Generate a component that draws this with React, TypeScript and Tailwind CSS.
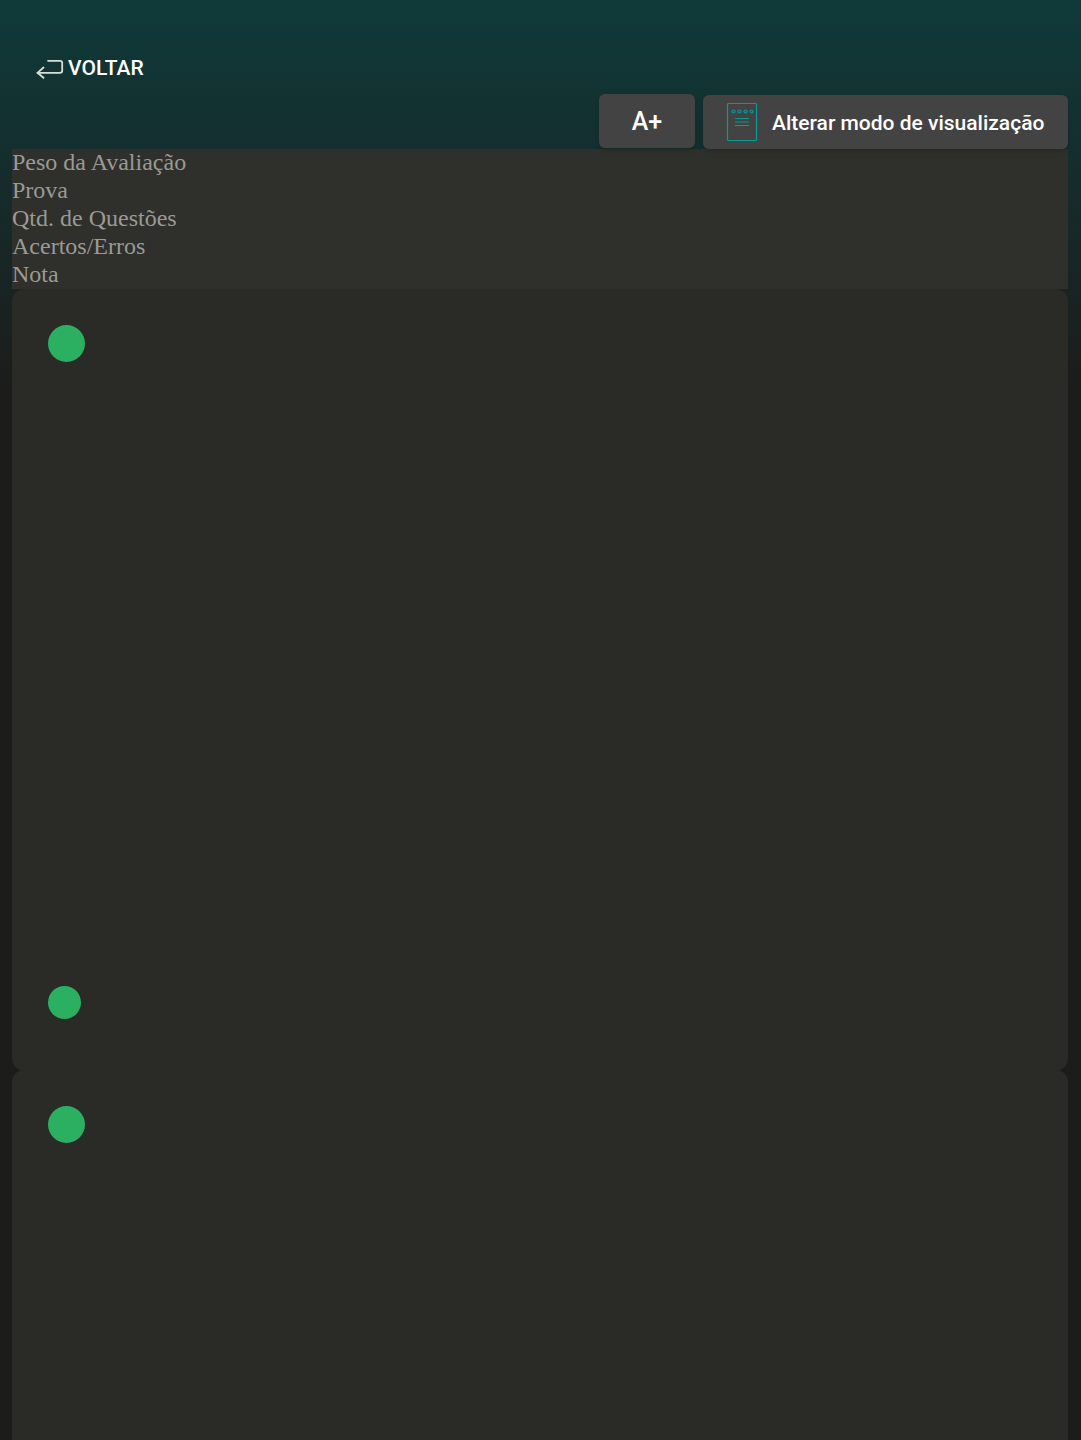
function ViewIcon() {
  return (
    <svg width="32" height="40" viewBox="0 0 32 40" fill="none" stroke="#0a9a96" strokeWidth="1.2">
      <rect x="1.5" y="1.5" width="29" height="37" rx="1" />
      <circle cx="7.5" cy="9.5" r="1.5" />
      <circle cx="13.5" cy="9.5" r="1.5" />
      <circle cx="19.5" cy="9.5" r="1.5" />
      <circle cx="25.5" cy="9.5" r="1.5" />
      <path d="M9 16.5H23M9 20H23M9 23.5H23" />
    </svg>
  );
}

function BackIcon() {
  return (
    <svg width="28" height="20" viewBox="0 0 28 20" fill="none" stroke="#d9dedd" strokeWidth="1.8" strokeLinecap="round" strokeLinejoin="round">
      <path d="M12 1.8H24C25.6 1.8 26.2 2.5 26.2 4V11.5C26.2 13 25.6 13.8 24 13.8H1.5" />
      <path d="M7.5 8.5L1.5 13.8L7.5 18.8" />
    </svg>
  );
}

const lines = ['Peso da Avaliação', 'Prova', 'Qtd. de Questões', 'Acertos/Erros', 'Nota'];

function Card() {
  return (
    <div className="rounded-xl bg-[#2a2a27] px-9 pt-9 pb-[51px] shadow-[0_1px_0_#242421]">
      <div className="w-[37px] h-[37px] rounded-full bg-[#2bb062]"></div>
      <div className="w-[33px] h-[33px] rounded-full bg-[#2bb062] mt-[624px]"></div>
    </div>
  );
}

export default function App() {
  return (
    <div className="h-[1440px] overflow-hidden bg-[linear-gradient(to_bottom,#0f3a3a_0px,#1c1c1b_390px)] font-['Roboto',sans-serif]">
      <div className="pl-3 pr-[13px] pt-[53px]">
        <div className="flex items-center h-8 pl-[24px] text-white text-[21px] font-medium">
          <BackIcon />
          <span className="ml-[4px]">VOLTAR</span>
        </div>
        <div className="flex justify-end items-start gap-2 mt-[9px] h-[55px]">
          <button className="w-24 h-[54px] pt-0.5 rounded-md bg-[#434343] text-white text-[25px] font-medium shadow-md">A+</button>
          <button className="w-[365px] h-[54px] rounded-md bg-[#434343] text-white text-[21px] font-medium shadow-md flex items-center pl-[23px] mt-px">
            <ViewIcon />
            <span className="ml-[14px] pt-[3px]">Alterar modo de visualização</span>
          </button>
        </div>
        <div className="bg-[#2f2f2b] text-[#9a9a96] text-2xl font-['Liberation_Serif',serif]">
          {lines.map((l) => (
            <div key={l} className="h-7 leading-[26px]">{l}</div>
          ))}
        </div>
        <Card />
        <Card />
      </div>
    </div>
  );
}
